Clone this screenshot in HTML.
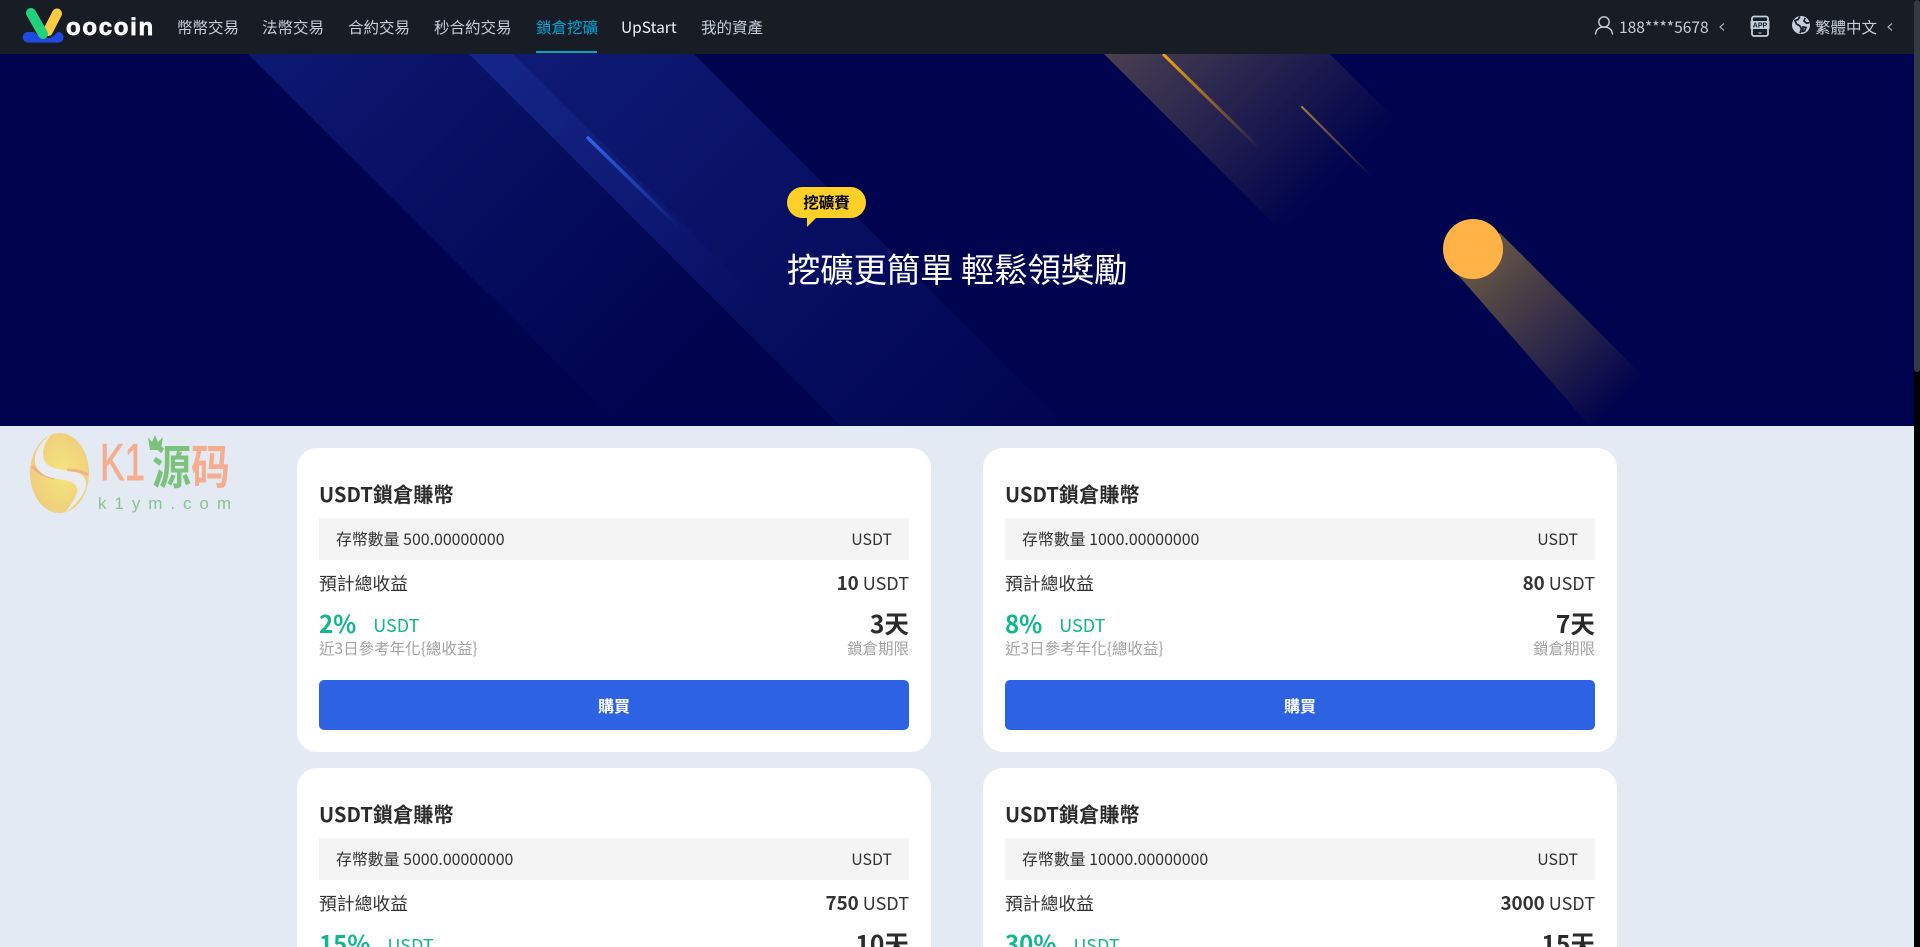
<!DOCTYPE html>
<html lang="zh-Hant"><head><meta charset="utf-8"><title>鎖倉挖礦</title>
<style>
*{margin:0;padding:0;box-sizing:border-box}
html,body{width:1920px;height:947px;overflow:hidden;background:#000}
body{position:relative;font-family:"Noto Sans CJK TC","Liberation Sans",sans-serif;color:#2b2b2b}
.abs,.nav a,.card,.card>*{position:absolute}
#page{position:absolute;left:0;top:0;width:1914px;height:947px;background:#e4eaf4;overflow:hidden}
#hdr{position:absolute;left:0;top:0;width:1914px;height:54px;background:#181d25;z-index:3}
.nav a{top:12px;height:30px;line-height:30px;font-size:15.5px;color:#c5cfdc;white-space:nowrap;text-decoration:none}
.nav a.on{color:#00a5d6}
.nav a.w{color:#f2f5f9}
#ul{position:absolute;left:536px;top:51px;width:61px;height:2px;background:#00a5d6}
#hero{position:absolute;left:0;top:54px;width:1914px;height:372px;background:#00034d;overflow:hidden}
#bub{position:absolute;left:787px;top:187px;width:79px;height:31px;border-radius:15.5px;background:#ffd028;color:#000;font-size:15.5px;font-weight:700;text-align:center;line-height:31px;z-index:2}
#h1{position:absolute;left:787px;top:244px;font-size:33.3px;line-height:48px;color:#fff;white-space:nowrap;z-index:2}
.card{width:634px;height:304px;background:#fff;border-radius:20px}
.card.cut{height:179px;overflow:hidden;border-radius:20px 20px 0 0}
.t{left:22px;top:31px;line-height:30px;font-size:20.2px;font-weight:700;color:#2b2b2b;white-space:nowrap}
.row{left:22px;top:70px;width:590px;height:42px;background:#f4f4f4;font-size:15.9px;line-height:42px;padding:0 17px;display:flex;justify-content:space-between;color:#333}
.l1{left:22px;top:120px;line-height:30px;font-size:17.8px;color:#333}
.r1{right:22px;top:120px;line-height:30px;font-size:18px;color:#333;white-space:nowrap}
.r1 b{font-size:18.8px}
.r1 b,.d{font-weight:700}
.pct{left:22px;top:155px;height:24px;overflow:hidden;line-height:40px;font-size:24px;font-weight:700;color:#0fb78f;white-space:nowrap}
.pct span{font-size:18px;font-weight:400;margin-left:17px;position:relative;top:-1px}
.d{right:22px;top:155px;height:24px;overflow:hidden;line-height:40px;font-size:24.6px;color:#2b2b2b;white-space:nowrap}
.card:not(.cut) .pct,.card:not(.cut) .d{height:40px}
.s1,.s2{top:188px;line-height:24px;font-size:15.5px;color:#a3a3a3;white-space:nowrap}
.s1{left:22px}.s2{right:22px}
.btn{left:22px;top:232px;width:590px;height:50px;background:#2d63e3;border-radius:5px;color:#fff;font-size:16px;font-weight:700;line-height:50px;text-align:center}
#sb{position:absolute;left:1914px;top:0;width:6px;height:947px;background:#000}
#sb i{display:block;width:6px;height:372px;background:#343944;border-radius:3px}
</style></head><body>
<div id="page">
<div id="hdr">
<svg class="abs" style="left:0;top:0" width="170" height="54" viewBox="0 0 170 54">
<path d="M28 32h6l8 6 9 0 7-6h.3a5.300 5.300 0 0 1 0 10.600H28a5.300 5.300 0 0 1 0-10.600z" fill="#2049e0"/>
<path d="M57 13.500 48 31" stroke="#ffcb45" stroke-width="10" stroke-linecap="round" fill="none"/>
<path d="M31 13 43 34" stroke="#22d27a" stroke-width="10" stroke-linecap="round" fill="none"/>
<text x="66" y="35" font-family="Liberation Sans" font-weight="700" font-size="24" letter-spacing="1.700" fill="#fff" stroke="#fff" stroke-width=".7">oocoin</text>
</svg>
<div class="nav">
<a style="left:177px">幣幣交易</a><a style="left:262px">法幣交易</a><a style="left:348px">合約交易</a><a style="left:434px">秒合約交易</a><a class="on" style="left:536px">鎖倉挖礦</a><a class="w" style="left:621px">UpStart</a><a style="left:701px">我的資產</a>
</div>
<div id="ul"></div>
<svg class="abs" style="left:1590px;top:10px" width="30" height="30" viewBox="0 0 30 30" fill="none" stroke="#c5cfdc" stroke-width="1.400">
<circle cx="14" cy="12" r="5.200"/><path d="M5.500 24c.6-4.600 3.800-7 8.500-7s7.900 2.400 8.500 7" stroke-linecap="round"/>
</svg>
<span class="abs" style="left:1619px;top:12px;line-height:30px;font-size:15.6px;color:#c5cfdc">188****5678</span>
<svg class="abs" style="left:1718px;top:22px" width="8" height="10" viewBox="0 0 8 10" fill="none" stroke="#b5bfcc" stroke-width="1.100"><path d="M6 1.500 2 5l4 3.500"/></svg>
<svg class="abs" style="left:1750px;top:15px" width="20" height="22" viewBox="0 0 20 22">
<rect x="2" y="1.500" width="16" height="19.500" rx="2" fill="none" stroke="#c5cfdc" stroke-width="1.800"/>
<rect x="0.500" y="6" width="19" height="8" fill="#c5cfdc"/>
<text x="10" y="12.700" text-anchor="middle" font-family="Liberation Sans" font-weight="700" font-size="7" fill="#181d25">APP</text>
<rect x="8.500" y="17.500" width="3" height="1" fill="#c5cfdc"/>
</svg>
<svg class="abs" style="left:1791px;top:15px" width="20" height="20" viewBox="0 0 20 20">
<circle cx="10" cy="10" r="9" fill="#c5cfdc"/>
<path d="M9 1.500 7 4.500 4 5.500 5.500 9 9 11l1.500 3-1.500 4.200M14 3l-1 3 2.500 2.200 3-.5M12 12l3 .5-1.500 3.500-2 .5z" fill="none" stroke="#181d25" stroke-width="1.700"/>
</svg>
<span class="abs" style="left:1815px;top:12px;line-height:30px;font-size:15.5px;color:#c5cfdc">繁體中文</span>
<svg class="abs" style="left:1886px;top:22px" width="8" height="10" viewBox="0 0 8 10" fill="none" stroke="#b5bfcc" stroke-width="1.100"><path d="M6 1.500 2 5l4 3.500"/></svg>
</div>

<div id="hero">
<svg class="abs" style="left:0;top:0" width="1914" height="372" viewBox="0 54 1914 372">
<defs>
<linearGradient id="ba" gradientUnits="userSpaceOnUse" x1="248" y1="54" x2="630" y2="436"><stop offset="0" stop-color="#3050d0" stop-opacity=".28"/><stop offset="1" stop-color="#3050d0" stop-opacity="0"/></linearGradient>
<linearGradient id="bb" gradientUnits="userSpaceOnUse" x1="469" y1="54" x2="985" y2="570"><stop offset="0" stop-color="#3050d0" stop-opacity=".32"/><stop offset="1" stop-color="#3050d0" stop-opacity="0"/></linearGradient>
<linearGradient id="ob" gradientUnits="userSpaceOnUse" x1="1104" y1="54" x2="1284.500" y2="234.500"><stop offset="0" stop-color="#f7cf57" stop-opacity=".3"/><stop offset="1" stop-color="#f7cf57" stop-opacity="0"/></linearGradient>
<linearGradient id="tr" gradientUnits="userSpaceOnUse" x1="1473" y1="249" x2="1622" y2="398"><stop offset="0" stop-color="#eec439" stop-opacity=".45"/><stop offset="1" stop-color="#eec439" stop-opacity="0"/></linearGradient>
<linearGradient id="s1" gradientUnits="userSpaceOnUse" x1="588" y1="138" x2="680" y2="228"><stop offset="0" stop-color="#3163e8"/><stop offset="1" stop-color="#3163e8" stop-opacity="0"/></linearGradient>
<linearGradient id="s2" gradientUnits="userSpaceOnUse" x1="1163" y1="54" x2="1259" y2="148"><stop offset="0" stop-color="#f0a010"/><stop offset="1" stop-color="#f0a010" stop-opacity="0"/></linearGradient>
<linearGradient id="s3" gradientUnits="userSpaceOnUse" x1="1302" y1="107" x2="1372" y2="177"><stop offset="0" stop-color="#a07840"/><stop offset="1" stop-color="#a07840" stop-opacity="0"/></linearGradient>
</defs>
<polygon points="248,54 513,54 885,426 620,426" fill="url(#ba)"/>
<polygon points="469,54 694,54 1066,426 841,426" fill="url(#bb)"/>
<polygon points="1104,54 1330,54 1500,224 1274,224" fill="url(#ob)"/>
<polygon points="1500,233 1647,380 1647,382 1600,426 1590,426 1458,275" fill="url(#tr)"/>
<path d="M588 138 680 228" stroke="url(#s1)" stroke-width="3.500" stroke-linecap="round"/>
<path d="M1163 54 1259 148" stroke="url(#s2)" stroke-width="3"/>
<path d="M1302 107 1372 177" stroke="url(#s3)" stroke-width="2.200" stroke-linecap="round"/>
<circle cx="1473" cy="249" r="30" fill="#ffb347"/>
</svg>
</div>

<div id="bub">挖礦賚</div>
<svg class="abs" style="left:806px;top:217px;z-index:2" width="12" height="11" viewBox="0 0 12 11"><polygon points="1,0 11,0 1,10" fill="#ffd028"/></svg>
<div id="h1">挖礦更簡單 輕鬆領獎勵</div>

<svg class="abs" style="left:0;top:426px" width="250" height="100" viewBox="0 426 250 100">
<defs><radialGradient id="eg" cx=".55" cy=".5" r=".65"><stop offset="0" stop-color="#f5e57c"/><stop offset="1" stop-color="#eec97c"/></radialGradient></defs>
<ellipse cx="59.500" cy="473" rx="29.500" ry="40" fill="url(#eg)"/>
<path d="M32 466c5 6 13 10 22 12M67 470c8 0 15 1 21 5" stroke="#eea78f" stroke-width="3" fill="none" opacity=".8"/>
<path d="M52 434C42 444 41 456 46 463 50 469 66 470 78 473 86 476 88 484 84 492 80 500 72 508 65 513 74 500 80 492 76 486 72 479 56 480 46 476 36 471 33 462 36 453 39 445 45 438 52 434Z" fill="#e9edf2"/>
<text x="100" y="480" font-family="Liberation Sans" font-size="52" fill="#f5ad90" stroke="#f5ad90" stroke-width=".9" textLength="45" lengthAdjust="spacingAndGlyphs">K1</text>
<polygon points="148,437 152,442 155,435 158,442 163,437 161,450 150,450" fill="#7cc27d"/>
<text x="152" y="484" font-family="Noto Sans CJK SC" font-weight="700" font-size="47" fill="#7cc27d" textLength="39" lengthAdjust="spacingAndGlyphs">源</text>
<text x="191" y="484" font-family="Noto Sans CJK SC" font-weight="700" font-size="47" fill="#f5ad90" textLength="39" lengthAdjust="spacingAndGlyphs">码</text>
<text x="98" y="509" font-family="Liberation Sans" font-size="17" fill="#86c68a" textLength="133">k1ym.com</text>
</svg>

<div class="card" style="left:297px;top:448px">
<div class="t">USDT鎖倉賺幣</div><div class="row"><span>存幣數量 500.00000000</span><span>USDT</span></div>
<div class="l1">預計總收益</div><div class="r1"><b>10</b> USDT</div>
<div class="pct">2%<span>USDT</span></div><div class="d">3天</div>
<div class="s1">近3日參考年化{總收益}</div><div class="s2">鎖倉期限</div><div class="btn">購買</div>
</div>
<div class="card" style="left:983px;top:448px">
<div class="t">USDT鎖倉賺幣</div><div class="row"><span>存幣數量 1000.00000000</span><span>USDT</span></div>
<div class="l1">預計總收益</div><div class="r1"><b>80</b> USDT</div>
<div class="pct">8%<span>USDT</span></div><div class="d">7天</div>
<div class="s1">近3日參考年化{總收益}</div><div class="s2">鎖倉期限</div><div class="btn">購買</div>
</div>
<div class="card cut" style="left:297px;top:768px">
<div class="t">USDT鎖倉賺幣</div><div class="row"><span>存幣數量 5000.00000000</span><span>USDT</span></div>
<div class="l1">預計總收益</div><div class="r1"><b>750</b> USDT</div>
<div class="pct">15%<span>USDT</span></div><div class="d">10天</div>
</div>
<div class="card cut" style="left:983px;top:768px">
<div class="t">USDT鎖倉賺幣</div><div class="row"><span>存幣數量 10000.00000000</span><span>USDT</span></div>
<div class="l1">預計總收益</div><div class="r1"><b>3000</b> USDT</div>
<div class="pct">30%<span>USDT</span></div><div class="d">15天</div>
</div>
</div>
<div id="sb"><i></i></div>
</body></html>
